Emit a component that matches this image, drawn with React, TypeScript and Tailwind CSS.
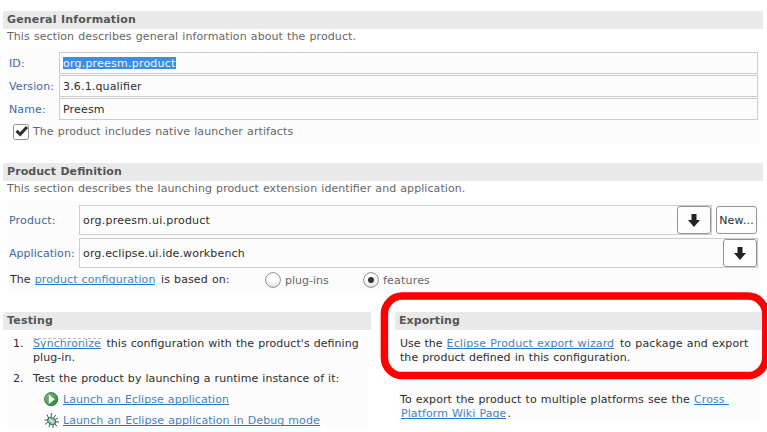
import type { ReactNode } from "react";

function Header({ children }: { children: ReactNode }) {
  return (
    <div className="h-[18px] rounded-t-[2px] bg-[#e9e9e9] pl-1 font-bold leading-[17px] text-[#555]">{children}</div>
  );
}

function Link({ children, focused }: { children: ReactNode; focused?: boolean }) {
  return (
    <a className="relative inline-block h-3 whitespace-pre border-b border-[#2a76c6] leading-[14px] text-[#4583c4]">
      {children}
      {focused && <i className="absolute inset-x-0 top-px border-t border-dashed border-[#bbb]" />}
    </a>
  );
}

function Field({ label, children }: { label: string; children: ReactNode }) {
  return (
    <div className="flex h-[22px] items-center">
      <span className="w-[50px] pt-0.5 tracking-[0.12px] text-[#40699c]">{label}</span>
      <div className="flex h-[22px] w-[699px] items-center border border-[#cccccc] bg-[#fcfcfc] pl-[3px] pt-0.5 tracking-[0.16px] text-[#2e2e2e]">
        {children}
      </div>
    </div>
  );
}

function ArrowButton() {
  return (
    <div className="flex h-7 w-[34px] items-center justify-center rounded-[3px] border border-[#929292] bg-[#fdfdfd]">
      <svg width="12" height="13" viewBox="0 0 12 13" fill="#222">
        <path d="M3.500 0h5v6H12L6 13 0 6h3.500z" />
      </svg>
    </div>
  );
}

function Radio({ checked }: { checked?: boolean }) {
  return (
    <svg width="16" height="16" viewBox="0 0 16 16">
      <defs>
        <linearGradient id="radioFace" x1="0" y1="0" x2="0" y2="1">
          <stop offset=".5" stopColor="#fff" />
          <stop offset="1" stopColor="#e2e2e2" />
        </linearGradient>
      </defs>
      <circle cx="8" cy="8" r="7.4" fill="url(#radioFace)" stroke="#8c8c8c" strokeWidth="1" />
      {checked && <circle cx="8" cy="8" r="3" fill="#333" />}
    </svg>
  );
}

function RunIcon() {
  return (
    <svg className="-mt-px" width="15" height="15" viewBox="0 0 15 15">
      <defs>
        <linearGradient id="run" x1="0" y1="0" x2="1" y2="1">
          <stop stopColor="#8abf7d" />
          <stop offset="1" stopColor="#237c3c" />
        </linearGradient>
      </defs>
      <circle cx="7.2" cy="7.2" r="6.6" fill="url(#run)" stroke="#2f7d48" />
      <path d="M4.800 2.500l6 4.700-6 4.700z" fill="#fff" />
    </svg>
  );
}

function BugIcon() {
  return (
    <svg className="-mt-px" width="15" height="15" viewBox="0 0 15 15" fill="none" stroke="#35605f">
      <path d="M4.500 5L3 1.500M7 4L7.500 0M9.500 5L12 2M4 7H.5M4 9L1 11.500M10.500 6.500L14 5M11 9h4M6 11L5 14M9 12v3M11 11l2 2.500" />
      <ellipse cx="7.600" cy="8" rx="4.200" ry="3.300" transform="rotate(35 7.600 8)" fill="#8fc3a4" />
      <path d="M5.500 6.500l4 3" stroke="#e3f5df" strokeWidth="1.500" />
    </svg>
  );
}

export default function App() {
  return (
    <div className="relative h-[432px] w-[767px] overflow-hidden whitespace-pre bg-white pl-[3px] pt-[11px] font-['DejaVu_Sans',sans-serif] text-[11px] leading-[14px] tracking-[0.07px] text-[#2e2e2e] [font-feature-settings:'liga'_1] [word-spacing:0.5px]">
      <section className="h-[152px] w-[760px]">
        <Header><span className="tracking-[0.17px]">General Information</span></Header>
        <p className="h-5 pl-1 leading-[15px] tracking-[0.09px] text-[#666]">This section describes general information about the product.</p>
        <div className="ml-1 flex h-[95px] w-[752px] flex-col gap-px bg-[#fcfcfc] pl-0.5 pt-[3px]">
          <Field label="ID:">
            <span className="-mt-0.5 h-3 bg-[#3b8ee5] leading-[13px] tracking-[0.22px] text-[#eef5fc]">org.preesm.product</span>
          </Field>
          <Field label="Version:">3.6.1.qualifier</Field>
          <Field label="Name:">Preesm</Field>
          <div className="flex h-[22px] items-center gap-1 pl-1 tracking-[0.09px] text-[#666]">
            <svg className="-mt-px" width="16" height="16" viewBox="0 0 16 16">
              <rect x=".5" y=".5" width="15" height="15" rx="2" fill="#fcfcfc" stroke="#929292" />
              <path d="M3.500 6.800l3.700 3.500L14 3" fill="none" stroke="#2e2e2e" strokeWidth="3" />
            </svg>
            The product includes native launcher artifacts
          </div>
        </div>
      </section>

      <section className="h-[149px] w-[760px]">
        <Header>Product Definition</Header>
        <p className="h-5 pl-1 leading-[15px] text-[#666]">This section describes the launching product extension identifier and application.</p>
        <div className="ml-1 h-[92px] w-[752px] bg-[#fcfcfc] pl-0.5 pt-1">
          <div className="flex h-[30px] items-center">
            <span className="w-[70px] pt-0.5 tracking-[0.15px] text-[#40699c]">Product:</span>
            <div className="flex h-[30px] w-[633px] items-center justify-between border border-[#ccc] pl-[3px]">
              <span className="pt-0.5 tracking-[0.24px]">org.preesm.ui.product</span>
              <ArrowButton />
            </div>
            <div className="ml-1 flex h-7 w-[41px] items-center justify-center rounded-[3px] border border-[#929292] bg-[#fdfdfd] pt-0.5 tracking-[0.2px]">New...</div>
          </div>
          <div className="mt-[3px] flex h-[30px] items-center">
            <span className="w-[70px] pt-0.5 tracking-[0.04px] text-[#40699c]">Application:</span>
            <div className="flex h-[30px] w-[679px] items-center justify-between border border-[#ccc] pl-[3px]">
              <span className="pt-0.5 tracking-[0.15px]">org.eclipse.ui.ide.workbench</span>
              <ArrowButton />
            </div>
          </div>
          <div className="flex h-6 items-center">
            <span className="w-64 pl-px">The <Link>product configuration</Link><span className="pl-[1.5px] tracking-[0.1px]"> is based on:</span></span>
            <span className="flex w-[98px] items-center gap-1 text-[#666]"><Radio /><span className="pt-0.5 tracking-[0px]">plug-ins</span></span>
            <span className="flex items-center gap-1 text-[#666]"><Radio checked /><span className="pt-0.5 tracking-[0.2px]">features</span></span>
          </div>
        </div>
      </section>

      <div className="flex gap-6">
        <section className="w-[368px]">
          <Header><span className="tracking-[0.2px]">Testing</span></Header>
          <div className="ml-1 mt-1.5 h-[92px] w-[360px] bg-[#fcfcfc] pl-1.5 pt-px">
            <div className="flex h-[35px]">
              <span className="w-5">1.</span>
              <span><Link focused>Synchronize</Link><span className="pl-[1.5px] tracking-[0.05px]">{" this configuration with the product's defining"}</span>{"\nplug-in."}</span>
            </div>
            <div className="flex h-[21px]">
              <span className="w-5">2.</span>
              <span className="tracking-[0.05px]">Test the product by launching a runtime instance of it:</span>
            </div>
            <div className="flex h-[21px] gap-1 pl-[31px] tracking-[0.04px]"><RunIcon /><Link>Launch an Eclipse application</Link></div>
            <div className="flex h-[15px] gap-1 pl-[31px] tracking-[0.06px]"><BugIcon /><Link>Launch an Eclipse application in Debug mode</Link></div>
          </div>
        </section>
        <section className="w-[368px]">
          <Header>Exporting</Header>
          <div className="ml-1 mt-1.5 h-[85px] w-[360px] bg-[#fcfcfc] pl-px pt-px">
            <p className="h-14"><span className="tracking-[0.13px]"><span className="tracking-[0px]">Use the </span><Link>Eclipse Product export wizard</Link><span className="pl-[1.5px]"> to package and export</span></span><span className="tracking-[0.05px]">{"\nthe product defined in this configuration."}</span></p>
            <p><span className="tracking-[0.09px]">To export the product to multiple platforms see the <Link>{"Cross "}</Link></span>{"\n"}<span className="pl-[1px]"><Link>Platform Wiki Page</Link></span><span className="pl-px">.</span></p>
          </div>
        </section>
      </div>
      <svg className="absolute left-0 top-0" width="767" height="432" viewBox="0 0 767 432">
        <rect x="384.400" y="296.100" width="381.400" height="79.500" rx="18" fill="none" stroke="#f00" strokeWidth="7.500" />
      </svg>
    </div>
  );
}
